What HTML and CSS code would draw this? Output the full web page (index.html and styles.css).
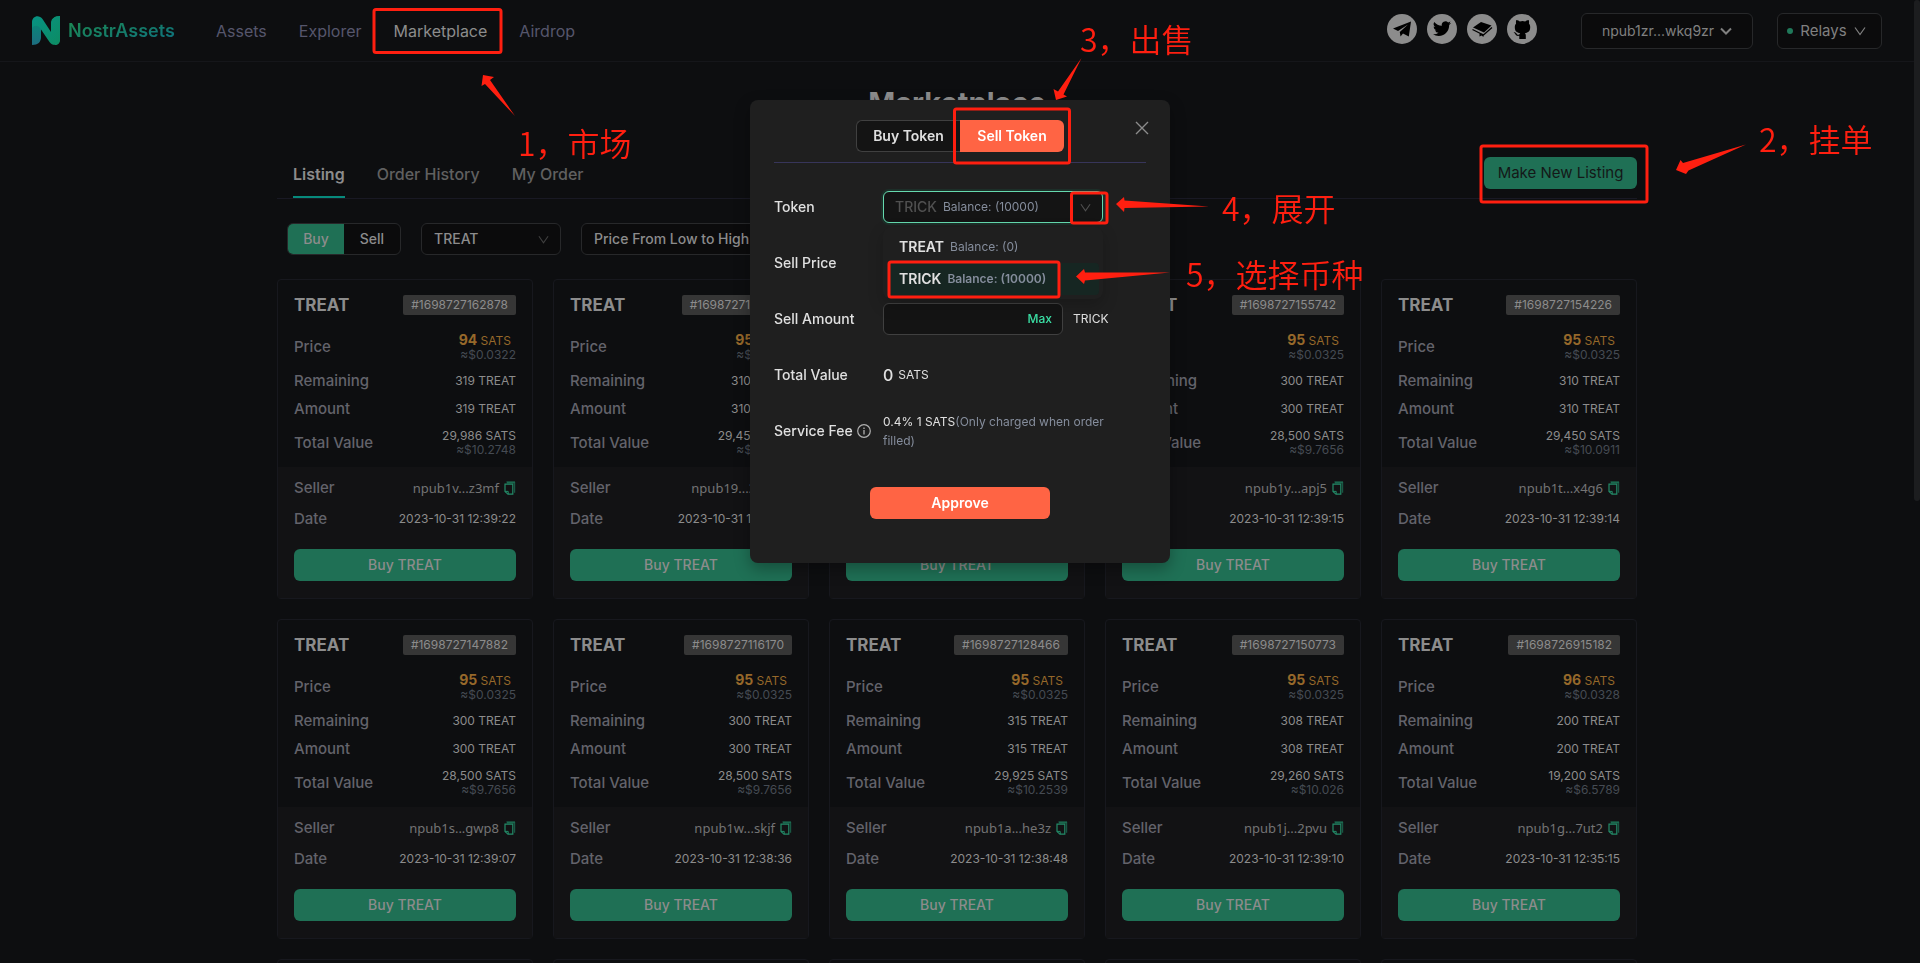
FILE: index.html
```html
<!DOCTYPE html>
<html lang="en">
<head>
<meta charset="utf-8">
<title>NostrAssets Marketplace</title>
<link rel="stylesheet" href="styles.css">
</head>
<body>
<svg class="sprite" aria-hidden="true">
  <symbol id="chevron" viewBox="0 0 12 12"><path d="M1 2.5 6 9.5 11 2.5" fill="none" stroke="currentColor" stroke-width="1.2"/></symbol>
  <symbol id="copy" viewBox="0 0 12 14"><path d="M3 1h8.2v10.8H10V2.6H3z" fill="#1d7d5c" opacity=".65"/><path d="M2.5 1H11" stroke="#1d7d5c" fill="none"/><path d="M1 3.2h7.8v10H4L1 10.6z" fill="none" stroke="#238b68" stroke-width="1.2"/><path d="M1 10.4h3.2v2.8" fill="none" stroke="#238b68"/></symbol>
</svg>

<div class="page">
  <header class="header">
    <a class="logo" href="#" aria-label="NostrAssets">
      <svg class="logo-mark" viewBox="0 0 28 29" aria-hidden="true">
        <defs>
          <linearGradient id="lg1" x1="0" y1="0" x2="1" y2="1"><stop offset="0" stop-color="#079284"/><stop offset="1" stop-color="#0d8c63"/></linearGradient>
          <linearGradient id="lg2" x1="0" y1="0" x2="0" y2="1"><stop offset="0" stop-color="#0a8478"/><stop offset="1" stop-color="#1d6d80"/></linearGradient>
        </defs>
        <path d="M0 9h9v12c0 5-3 8-9 8z" fill="url(#lg2)"/>
        <path d="M19 20V8c0-5 3-8 9-8v24c0 3-2 5-5 5z" fill="#12855c"/>
        <path d="M0 12V6C0 0 7-2 10.500 3L19 16V8c0-5 3-8 9-8v23c0 6-7 8-10.500 3L8 12C6 9 2 9 0 12z" fill="url(#lg1)"/>
      </svg>
      <span class="logo-text">NostrAssets</span>
    </a>
    <nav class="nav">
      <a href="#">Assets</a>
      <a href="#">Explorer</a>
      <a href="#" class="active">Marketplace</a>
      <a href="#">Airdrop</a>
    </nav>
    <div class="social">
      <a href="#" aria-label="Telegram"><svg viewBox="0 0 30 30"><path d="M6 14.500 24 7.500 21.800 22.500 16 19.500 13.500 22.500 12.800 18 21 10.500 11 17z"/></svg></a>
      <a href="#" aria-label="Twitter"><svg viewBox="-8 -7.500 40 40"><path d="M23.950 4.570a10 10 0 0 1-2.820.770 4.960 4.960 0 0 0 2.160-2.720c-.950.550-2 .950-3.130 1.180a4.920 4.920 0 0 0-8.380 4.480A13.940 13.940 0 0 1 1.640 3.160a4.920 4.920 0 0 0 1.520 6.570 4.900 4.900 0 0 1-2.230-.610v.060a4.920 4.920 0 0 0 3.950 4.830 5 5 0 0 1-2.210.080 4.940 4.940 0 0 0 4.600 3.420A9.870 9.870 0 0 1 0 19.540a13.990 13.990 0 0 0 7.550 2.210c9.050 0 14-7.500 14-13.980 0-.210 0-.420-.020-.630a9.940 9.940 0 0 0 2.460-2.550z"/></svg></a>
      <a href="#" aria-label="Docs"><svg viewBox="0 0 30 30"><path d="M6 13.500 14 8l10.500 3.500L17 18.500z"/><path d="M5.500 15.500 16.500 21 25 13.500" fill="none" stroke="#000" stroke-width="1.300"/><path d="M12.500 19.500v3l2-1 2 1.500V20z"/></svg></a>
      <a href="#" aria-label="GitHub"><svg viewBox="0 0 30 30"><path d="M12.300 25v-3.200c-2.800.500-3.600-.800-4.200-2-.400-.700-.900-1-1.500-1.300 1.500-.500 2.500.400 3.200 1.500.700 1 1.600 1 2.600.600.100-.600.400-1.200.800-1.500C9.600 18.600 7.800 17 7.800 13.200c0-1.500.500-2.700 1.300-3.600-.200-.800-.300-2.200.200-3.600 1.500 0 2.700.800 3.500 1.400a12 12 0 0 1 5.400 0c.800-.600 2-1.400 3.500-1.400.5 1.400.400 2.800.200 3.600.8.900 1.300 2.100 1.300 3.600 0 3.800-1.900 5.400-5.300 5.900.5.500.9 1.300.9 2.500V25z"/></svg></a>
    </div>
    <button class="box-btn account" type="button">npub1zr...wkq9zr
      <svg viewBox="0 0 12 12" aria-hidden="true"><path d="M1 3.500 6 8.500 11 3.500" fill="none" stroke="currentColor" stroke-width="2"/></svg></button>
    <button class="box-btn relays" type="button"><span class="dot"></span>Relays
      <svg aria-hidden="true"><use href="#chevron"/></svg></button>
  </header>

  <main class="main">
    <h1 class="title">Marketplace</h1>
    <div class="tabs">
      <button type="button" class="tab active">Listing</button>
      <button type="button" class="tab">Order History</button>
      <button type="button" class="tab">My Order</button>
      <button type="button" class="new-listing">Make New Listing</button>
    </div>
    <div class="filters">
      <div class="toggle">
        <button type="button" class="on">Buy</button>
        <button type="button">Sell</button>
      </div>
      <div class="select token-filter">
        <select aria-label="Token filter"><option>TREAT</option><option>TRICK</option></select>
        <svg aria-hidden="true"><use href="#chevron"/></svg>
      </div>
      <div class="select sort-filter">
        <select aria-label="Sort order"><option>Price From Low to High</option></select>
        <svg aria-hidden="true"><use href="#chevron"/></svg>
      </div>
    </div>
    <div class="cards" id="cards"></div>
  </main>
</div>
<div class="scrollbar" aria-hidden="true"></div>

<div class="modal-wrap">
  <section class="modal" role="dialog" aria-label="New listing">
    <button class="close" type="button" aria-label="Close"><svg viewBox="0 0 14 14"><path d="M1 1 13 13M13 1 1 13" stroke="currentColor" stroke-width="1.400"/></svg></button>
    <div class="modal-head">
      <div class="modal-toggle">
        <button type="button">Buy Token</button>
        <button type="button" class="on">Sell Token</button>
      </div>
    </div>
    <div class="form">
      <label for="token">Token</label>
      <div class="field">
        <button id="token" class="combo" type="button" role="combobox" aria-expanded="true" aria-controls="token-list">
          <span class="picked">TRICK</span><span class="balance">Balance: (10000)</span>
          <svg aria-hidden="true"><use href="#chevron"/></svg>
        </button>
        <ul class="options" id="token-list" role="listbox">
          <li role="option"><b>TREAT</b><span class="balance">Balance: (0)</span></li>
          <li role="option" aria-selected="true" class="selected"><b>TRICK</b><span class="balance">Balance: (10000)</span></li>
        </ul>
      </div>
      <label for="price">Sell Price</label>
      <div class="field"><span class="input"><input id="price" type="text"></span></div>
      <label for="amount">Sell Amount</label>
      <div class="field"><span class="input"><input id="amount" type="text"><button type="button" class="max">Max</button></span><span class="unit">TRICK</span></div>
      <span class="label">Total Value</span>
      <div class="field"><span class="zero">0</span><span class="sats">SATS</span></div>
      <span class="label">Service Fee
        <svg class="info" viewBox="0 0 14 14" aria-hidden="true"><circle cx="7" cy="7" r="6.300" fill="none" stroke="currentColor" stroke-width="1.200"/><path d="M7 6v4.500M7 3.500v1.400" stroke="currentColor" stroke-width="1.300"/></svg></span>
      <div class="field"><p class="fee">0.4% 1 SATS<span>(Only charged when order filled)</span></p></div>
    </div>
    <button class="approve" type="button">Approve</button>
  </section>
</div>

<div class="notes">
  <svg class="arrows" aria-hidden="true">
    <g fill="none" stroke="#ff1f10" stroke-width="3">
      <rect x="374" y="9.500" width="127" height="43" rx="2"/>
      <rect x="1481" y="146" width="166" height="56" rx="2"/>
      <rect x="954.500" y="109" width="115" height="54" rx="2"/>
      <rect x="1071.500" y="193" width="35.500" height="30" rx="2"/>
      <rect x="889" y="262" width="170" height="35" rx="2"/>
    </g>
    <g fill="#ff1f10">
      <path d="M483 75 494 77 490 80 515 116 485 84 481.500 86z"/>
      <path d="M1676 170 1680.500 160 1683 163 1746 144.500 1688.500 170.500 1686 174z"/>
      <path d="M1056 100 1053.500 89 1058 91.500 1081.500 58 1063.500 94.500 1067 96.500z"/>
      <path d="M1116 204 1124 197 1124.500 200.500 1209 206.500 1124.500 208 1124 212z"/>
      <path d="M1076 276.500 1084 269 1085 272.500 1170 272.500 1085 280.500 1084 284z"/>
    </g>
  </svg>
  <span class="note n1">1，市场</span>
  <span class="note n2">2，挂单</span>
  <span class="note n3">3，出售</span>
  <span class="note n4">4，展开</span>
  <span class="note n5">5，选择币种</span>
</div>
<script src="cards.js"></script>
</body>
</html>
```

FILE: styles.css
```css
* { box-sizing: border-box; }
body {
  margin: 0;
  background: #0d0e10;
  color: #8c8c8c;
  font-family: Inter, "Noto Sans", sans-serif;
  font-size: 14px;
  line-height: 20px;
}
button, input, select { font: inherit; color: inherit; margin: 0; padding: 0; border: 0; background: none; }
a { color: inherit; text-decoration: none; }
.sprite { position: absolute; width: 0; height: 0; }
.page { height: 100vh; overflow: hidden; padding-right: 6px; }
.scrollbar { position: fixed; top: 0; right: 0; width: 6px; height: 52vh; border-radius: 3px; background: #1c1d1f; }

/* Header */
.header { display: flex; align-items: center; height: 62px; padding: 0 32px; border-bottom: 1px solid #15161a; }
.logo { display: flex; align-items: center; gap: 8px; width: 184px; }
.logo-mark { width: 28px; height: 29px; }
.logo-text {
  font: 600 18px/24px Inter, sans-serif;
  background: linear-gradient(165deg, #1d8a50, #0d6f80);
  -webkit-background-clip: text;
  background-clip: text;
  color: transparent;
}
.nav { display: flex; gap: 32px; font-size: 16px; color: #56566c; }
.nav .active { color: #8c8c8c; }
.social { display: flex; gap: 10px; margin-left: auto; margin-right: 44px; padding-bottom: 3px; }
.social a { width: 30px; height: 30px; border-radius: 50%; background: #8c8c8c; }
.social svg { display: block; width: 30px; height: 30px; }
.box-btn { display: flex; align-items: center; justify-content: center; height: 36px; border: 1px solid #27282a; border-radius: 6px; background: #0b0b0c; font-size: 15px; color: #808080; }
.box-btn svg { width: 12px; height: 12px; }
.account { width: 172px; gap: 6px; margin-right: 24px; font-size: 14px; }
.relays { width: 105px; gap: 7px; padding-right: 6px; }
.dot { width: 6px; height: 6px; border-radius: 50%; background: #20795a; }

/* Page body */
.main { max-width: 1360px; margin: 0 auto; }
.title { margin: 21px 0 0; font-size: 29px; line-height: 40px; font-weight: 700; text-align: center; }
.tabs { display: flex; align-items: flex-end; gap: 32px; height: 76px; padding-left: 16px; border-bottom: 1px solid #191924; }
.tab { height: 40px; padding-bottom: 6px; border-bottom: 2px solid transparent; font-size: 16px; font-weight: 500; color: #606060; }
.tab.active { font-weight: 600; color: #8c8c8c; border-color: #078a7c; }
.new-listing { width: 153px; height: 32px; margin: 0 0 9px auto; border-radius: 6px; background: #1f7055; color: #141818; font-size: 15px; }
.filters { display: flex; gap: 20px; padding: 24px 10px; }
.toggle { display: flex; width: 114px; height: 32px; border: 1px solid #27282a; border-radius: 6px; overflow: hidden; background: #0b0b0c; font-weight: 500; }
.toggle button { flex: 1; }
.toggle .on { background: #1f7055; }
.select { position: relative; width: 140px; height: 32px; border: 1px solid #27282a; border-radius: 6px; background: #0b0b0c; font-weight: 500; }
.sort-filter { width: 220px; }
.select select { appearance: none; width: 100%; height: 100%; padding: 0 12px; }
.select svg { position: absolute; right: 11px; top: 10px; width: 11px; height: 11px; color: #404040; }

/* Listing cards */
.cards { display: grid; grid-template-columns: repeat(5, 1fr); gap: 20px; }
.card { min-height: 320px; border: 1px solid #17181e; border-radius: 4px; }
.card-top { padding: 15px 16px 8px; }
.card-head { display: flex; justify-content: space-between; align-items: center; height: 20px; margin-bottom: 16px; }
.card-head h2 { margin: 0; font-size: 17px; font-weight: 700; }
.tag { padding: 0 8px; border-radius: 2px; background: #363636; font-size: 12px; }
.row { display: flex; justify-content: space-between; align-items: center; min-height: 20px; margin-bottom: 8px; color: #63636b; font-size: 15px; font-weight: 500; }
.row:last-child { margin-bottom: 0; }
.row.tall { min-height: 32px; }
.value { font-size: 12px; font-weight: 400; text-align: right; color: #8c8c8c; line-height: 14px; }
.value small { display: block; font-size: 12px; color: #454b53; }
.price { padding-right: 5px; color: #96682a; }
.price b { font-size: 14px; font-weight: 700; }
.card-bottom { padding: 11px 16px 17px; background: #121214; }
.card-bottom .row { margin-bottom: 11px; }
.seller { display: flex; align-items: center; gap: 5px; font: 13px/20px "Noto Sans", sans-serif; color: #747474; }
.seller svg { width: 12px; height: 14px; }
.buy { display: block; width: 100%; height: 32px; margin-top: 20px; border-radius: 6px; background: #1f7055; font-weight: 500; color: #8c8c8c; }

/* Modal */
.modal-wrap { position: fixed; inset: 0; display: flex; justify-content: center; align-items: flex-start; padding-top: 100px; }
.modal { position: relative; width: 420px; padding: 20px 24px 44px; border-radius: 8px; background: #1f1f1f; color: #e0e0e0; box-shadow: 0 6px 16px rgba(0, 0, 0, .3); }
.close { position: absolute; top: 21px; right: 21px; width: 14px; height: 14px; color: #8c8c8c; }
.close svg { display: block; width: 14px; height: 14px; }
.modal-head { display: flex; justify-content: center; padding-bottom: 10px; border-bottom: 1px solid #37355a; }
.modal-toggle { display: flex; height: 32px; font-weight: 600; }
.modal-toggle button { width: 104px; border: 1px solid #404040; border-right: 0; border-radius: 6px 0 0 6px; background: #141414; }
.modal-toggle .on { border: 0; border-radius: 0 6px 6px 0; background: #ff6444; color: #fff; }
.form { display: grid; grid-template-columns: 109px 236px; grid-auto-rows: 32px; row-gap: 24px; align-items: center; margin-top: 28px; }
.form label, .label { display: flex; align-items: center; gap: 4px; font-weight: 500; white-space: nowrap; }
.field { position: relative; display: flex; align-items: center; height: 32px; }
.combo { display: flex; align-items: center; gap: 6px; width: 220px; height: 32px; padding: 0 11px; border: 1px solid #65d9ae; border-radius: 6px; background: #141414; box-shadow: 0 0 0 2px #1c2e28; }
.combo svg { width: 11px; height: 11px; margin-left: auto; color: #505050; }
.picked { font-weight: 500; color: #505050; }
.balance { font-size: 12px; color: #858d9c; }
.options { position: absolute; z-index: 2; top: 36px; left: 0; width: 220px; margin: 0; padding: 4px; list-style: none; border-radius: 8px; background: #1f1f1f; box-shadow: 0 6px 16px rgba(0, 0, 0, .2); }
.options li { display: flex; align-items: center; gap: 6px; height: 32px; padding: 0 12px; border-radius: 4px; }
.options b { font-weight: 600; }
.options .selected { background: #162622; }
.selected .balance { font-weight: 600; }
.input { display: flex; width: 180px; height: 32px; padding: 0 10px; border: 1px solid #404040; border-radius: 6px; background: #141414; }
.input input { flex: 1; min-width: 0; outline: 0; }
.max { font-size: 12px; font-weight: 500; color: #3be0a5; }
.unit { margin-left: 10px; font-size: 12px; }
.zero { margin-right: 5px; font-size: 16px; font-weight: 500; }
.sats { font-size: 12px; }
.info { width: 14px; height: 14px; color: #b0b0b0; }
.fee { margin: 0; font-size: 12px; line-height: 19px; }
.fee span { color: #858d9c; }
.approve { display: block; width: 180px; height: 32px; margin: 40px auto 0; border-radius: 6px; background: #ff6444; color: #fff; font-weight: 600; }

/* Tutorial notes lying over the page */
.notes { position: absolute; inset: 0; pointer-events: none; overflow: hidden; }
.arrows { display: block; width: 100%; height: 100%; }
.note { position: absolute; font: 350 32px/40px "Noto Sans CJK SC", sans-serif; color: #ff1f10; white-space: nowrap; }
.n1 { left: 518px; top: 122px; }
.n2 { left: 1759px; top: 118px; }
.n3 { left: 1080px; top: 18px; }
.n4 { left: 1222px; top: 187px; }
.n5 { left: 1186px; top: 253px; }
```

FILE: cards.js
```js
const listings = [
  ["1698727162878", 94, "0.0322", 319, "29,986", "10.2748", "npub1v...z3mf", "12:39:22"],
  ["1698727127310", 95, "0.0325", 310, "29,450", "10.0911", "npub19...3k2f", "12:39:17"],
  ["1698727156120", 95, "0.0325", 300, "28,500", "9.7656", "npub1q...7c2d", "12:39:16"],
  ["1698727155742", 95, "0.0325", 300, "28,500", "9.7656", "npub1y...apj5", "12:39:15"],
  ["1698727154226", 95, "0.0325", 310, "29,450", "10.0911", "npub1t...x4g6", "12:39:14"],
  ["1698727147882", 95, "0.0325", 300, "28,500", "9.7656", "npub1s...gwp8", "12:39:07"],
  ["1698727116170", 95, "0.0325", 300, "28,500", "9.7656", "npub1w...skjf", "12:38:36"],
  ["1698727128466", 95, "0.0325", 315, "29,925", "10.2539", "npub1a...he3z", "12:38:48"],
  ["1698727150773", 95, "0.0325", 308, "29,260", "10.026", "npub1j...2pvu", "12:39:10"],
  ["1698726915182", 96, "0.0328", 200, "19,200", "6.5789", "npub1g...7ut2", "12:35:15"],
];

const card = ([id, price, usd, amount, total, totalUsd, seller, time]) => `
  <article class="card">
    <div class="card-top">
      <div class="card-head"><h2>TREAT</h2><span class="tag">#${id}</span></div>
      <div class="row tall"><span>Price</span><span class="value"><span class="price"><b>${price}</b> SATS</span><small>≈$${usd}</small></span></div>
      <div class="row"><span>Remaining</span><span class="value">${amount} TREAT</span></div>
      <div class="row"><span>Amount</span><span class="value">${amount} TREAT</span></div>
      <div class="row tall"><span>Total Value</span><span class="value">${total} SATS<small>≈$${totalUsd}</small></span></div>
    </div>
    <div class="card-bottom">
      <div class="row"><span>Seller</span><span class="seller">${seller}<svg aria-hidden="true"><use href="#copy"/></svg></span></div>
      <div class="row"><span>Date</span><span class="value">2023-10-31 ${time}</span></div>
      <button class="buy" type="button">Buy TREAT</button>
    </div>
  </article>`;

const placeholder = '<article class="card"></article>';

document.getElementById("cards").innerHTML =
  listings.map(card).join("") + placeholder.repeat(5);
```
